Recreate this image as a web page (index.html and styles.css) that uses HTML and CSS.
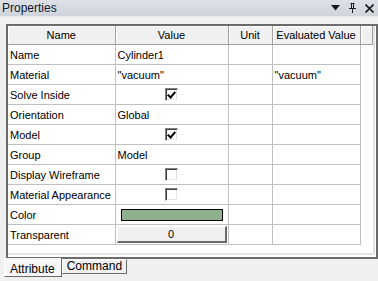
FILE: index.html
```html
<!DOCTYPE html>
<html lang="en">
<head>
    <meta charset="UTF-8">
    <meta name="viewport" content="width=device-width, initial-scale=1.0">
    <link rel="stylesheet" href="styles.css">
    <title>Properties</title>
</head>
<body>
    <div class="window">
        <div class="titlebar">
            <span class="title">Properties</span>
            <div class="title-buttons">
                <svg width="9" height="6" viewBox="0 0 9 6"><path d="M0 0H9L4.5 5.5Z" fill="#1a1a1a"/></svg>
                <svg width="7" height="10" viewBox="0 0 7 10"><path d="M1.5 0.5H5.5M2.5 0.5V5M4.5 0.5V5M0 5.5H7M3.5 5.5V10" stroke="#1a1a1a" fill="none"/></svg>
                <svg width="9" height="9" viewBox="0 0 9 9"><path d="M0.5 0.5L8.5 8.5M8.5 0.5L0.5 8.5" stroke="#1a1a1a" stroke-width="1.6"/></svg>
            </div>
        </div>
        <div class="panel">
            <div class="frame">
                <div class="inner">
                    <table class="props">
                        <colgroup>
                            <col class="c-name">
                            <col class="c-value">
                            <col class="c-unit">
                            <col class="c-eval">
                            <col class="c-fill">
                        </colgroup>
                        <thead>
                            <tr>
                                <th>Name</th>
                                <th>Value</th>
                                <th>Unit</th>
                                <th>Evaluated Value</th>
                                <th></th>
                            </tr>
                        </thead>
                        <tbody>
                            <tr><td>Name</td><td>Cylinder1</td><td></td><td></td><td class="fill"></td></tr>
                            <tr><td>Material</td><td>"vacuum"</td><td></td><td>"vacuum"</td><td class="fill"></td></tr>
                            <tr><td>Solve Inside</td><td class="center"><span class="check checked"></span></td><td></td><td></td><td class="fill"></td></tr>
                            <tr><td>Orientation</td><td>Global</td><td></td><td></td><td class="fill"></td></tr>
                            <tr><td>Model</td><td class="center"><span class="check checked"></span></td><td></td><td></td><td class="fill"></td></tr>
                            <tr><td>Group</td><td>Model</td><td></td><td></td><td class="fill"></td></tr>
                            <tr><td>Display Wireframe</td><td class="center"><span class="check"></span></td><td></td><td></td><td class="fill"></td></tr>
                            <tr><td>Material Appearance</td><td class="center"><span class="check"></span></td><td></td><td></td><td class="fill"></td></tr>
                            <tr><td>Color</td><td class="center"><span class="swatch"></span></td><td></td><td></td><td class="fill"></td></tr>
                            <tr><td>Transparent</td><td class="center"><span class="spin">0</span></td><td></td><td></td><td class="fill"></td></tr>
                        </tbody>
                    </table>
                </div>
            </div>
        </div>
        <div class="tabs">
            <div class="tab active">Attribute</div>
            <div class="tab">Command</div>
        </div>
    </div>
</body>
</html>
```

FILE: styles.css
```css
body {
    margin: 0;
    padding: 0;
    background-color: #f0f0f0;
    font-family: "Liberation Sans", Arial, sans-serif;
    font-size: 11px;
    color: #000;
}

.window {
    width: 378px;
    height: 281px;
    overflow: hidden;
}

.titlebar {
    height: 16px;
    display: flex;
    align-items: center;
    justify-content: space-between;
    padding: 0 4px 0 2px;
    background: linear-gradient(#dde1e7, #cfd4db);
    border-bottom: 1px solid #e6e9ed;
}

.title {
    font-size: 12px;
    color: #10182a;
}

.title-buttons {
    display: flex;
    align-items: center;
    gap: 9px;
}

.panel {
    padding: 7px 0 0 6px;
}

.frame {
    height: 231px;
    border: 2px solid #6b6b6b;
    background-color: #fff;
}

.inner {
    height: 227px;
    margin-right: 1px;
    border-right: 2px solid #e3e3e3;
    border-bottom: 2px solid #e3e3e3;
}

.props {
    border-collapse: collapse;
    table-layout: fixed;
    width: 364px;
}

.c-name { width: 107px; }
.c-value { width: 113px; }
.c-unit { width: 44px; }
.c-eval { width: 88px; }
.c-fill { width: 12px; }

.props th {
    height: 18px;
    padding: 0;
    font-weight: normal;
    background-color: #f0f0f0;
    border-right: 1px solid #a0a0a0;
    border-bottom: 1px solid #a0a0a0;
    box-shadow: inset 1px 1px 0 #fff;
}

.props td {
    height: 19px;
    padding: 0 0 0 2px;
    border-right: 1px solid #c0c0c0;
    border-bottom: 1px solid #c0c0c0;
    white-space: nowrap;
    overflow: hidden;
}

.props td.center {
    text-align: center;
    padding: 0;
}

.props td.fill {
    border-bottom: none;
    border-right: none;
}

.check {
    display: inline-block;
    width: 11px;
    height: 11px;
    vertical-align: middle;
    border-top: 1px solid #808080;
    border-left: 1px solid #808080;
    border-right: 1px solid #fff;
    border-bottom: 1px solid #fff;
    box-shadow: inset 1px 1px 0 #404040, inset -1px -1px 0 #e3e3e3;
    background-color: #fff;
    position: relative;
}

.check.checked::after {
    content: "";
    position: absolute;
    left: 3px;
    top: 1px;
    width: 3px;
    height: 6px;
    border-right: 2px solid #000;
    border-bottom: 2px solid #000;
    transform: rotate(40deg);
}

.swatch {
    display: inline-block;
    width: 100px;
    height: 10px;
    vertical-align: middle;
    background-color: #8fb08f;
    border: 1px solid #000;
}

.spin {
    display: block;
    width: 107px;
    height: 14px;
    line-height: 14px;
    margin: 0 auto;
    background-color: #f0f0f0;
    border-top: 1px solid #fff;
    border-left: 1px solid #fff;
    border-right: 2px solid #696969;
    border-bottom: 2px solid #696969;
}

.tabs {
    display: flex;
    align-items: flex-start;
    padding-left: 4px;
}

.tab {
    height: 13px;
    line-height: 13px;
    padding: 0 4px;
    font-size: 12px;
    background-color: #f0f0f0;
    border-top: 1px solid #fff;
    border-left: 1px solid #fff;
    border-right: 1px solid #696969;
    border-bottom: 1px solid #696969;
}

.tab.active {
    height: 18px;
    line-height: 22px;
    margin-top: -1px;
    padding: 0 6px 0 5px;
    background-color: #f7f7f7;
    border-top: none;
}
```
